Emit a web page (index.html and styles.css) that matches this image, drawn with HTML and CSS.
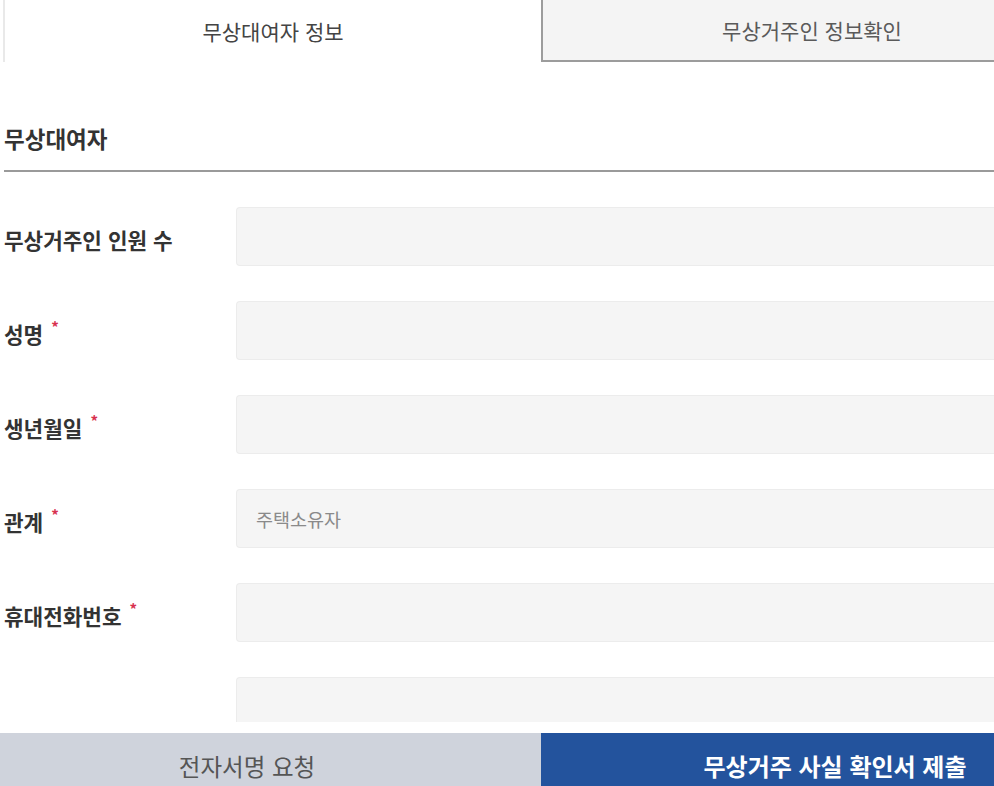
FILE: index.html
```html
<!DOCTYPE html>
<html lang="ko">
<head>
<meta charset="utf-8">
<title>무상거주 사실 확인서</title>
<link rel="stylesheet" href="styles.css">
</head>
<body>
<div class="page">
  <div class="tabs">
    <div class="tab tab-active">무상대여자 정보</div>
    <div class="tab tab-idle">무상거주인 정보확인</div>
  </div>

  <section class="section">
    <h2 class="section-title">무상대여자</h2>
    <div class="form">
      <div class="row">
        <div class="label">무상거주인 인원 수</div>
        <div class="field"></div>
      </div>
      <div class="row">
        <div class="label">성명<span class="req">*</span></div>
        <div class="field"></div>
      </div>
      <div class="row">
        <div class="label">생년월일<span class="req">*</span></div>
        <div class="field"></div>
      </div>
      <div class="row">
        <div class="label">관계<span class="req">*</span></div>
        <div class="field"><span class="placeholder">주택소유자</span></div>
      </div>
      <div class="row">
        <div class="label">휴대전화번호<span class="req">*</span></div>
        <div class="field"></div>
      </div>
      <div class="row">
        <div class="label"></div>
        <div class="field"></div>
      </div>
    </div>
  </section>
</div>

<div class="footer">
  <div class="footer-buttons">
    <div class="btn btn-gray">전자서명 요청</div>
    <div class="btn btn-blue">무상거주 사실 확인서 제출</div>
  </div>
</div>
</body>
</html>
```

FILE: styles.css
```css
html, body {
  margin: 0;
  padding: 0;
  background: #ffffff;
  overflow: hidden;
}

body {
  font-family: "Noto Sans CJK KR", "Noto Sans", sans-serif;
  color: #333333;
  height: 786px;
}

.page {
  width: 100%;
}

.tabs {
  display: flex;
  height: 62px;
}

.tab {
  display: flex;
  align-items: center;
  justify-content: center;
  font-size: 21px;
  color: #444444;
  box-sizing: border-box;
}

.tab-active {
  width: 538px;
  margin-left: 3px;
  border-left: 2px solid #e9e9e9;
  background: #ffffff;
}

.tab-idle {
  flex: 1;
  padding-left: 87px;
  background: #f4f4f4;
  border-left: 2px solid #9c9c9c;
  border-bottom: 2px solid #9c9c9c;
  color: #5a5a5a;
}

.section {
  padding-left: 4px;
}

.section-title {
  margin: 0;
  padding-top: 61px;
  line-height: 30px;
  height: 30px;
  padding-bottom: 17px;
  font-size: 22.5px;
  font-weight: 700;
  color: #333333;
  border-bottom: 2px solid #9a9a9a;
  box-sizing: content-box;
}

.form {
  display: flex;
  flex-direction: column;
  gap: 35px;
  padding-top: 35px;
}

.row {
  display: flex;
  align-items: center;
  height: 59px;
}

.label {
  width: 232px;
  font-size: 21.3px;
  font-weight: 700;
  color: #333333;
  padding-top: 6px;
  display: flex;
  align-items: flex-start;
}

.req {
  color: #d8314f;
  font-size: 15px;
  line-height: 1;
  margin-left: 8px;
  margin-top: 1px;
}

.field {
  flex: 1;
  height: 59px;
  box-sizing: border-box;
  background: #f5f5f5;
  border: 1px solid #ececec;
  border-right: none;
  border-radius: 4px 0 0 4px;
  display: flex;
  align-items: center;
  padding-left: 19px;
}

.placeholder {
  font-size: 18.5px;
  color: #8a8a8a;
}

.footer {
  position: fixed;
  left: 0;
  bottom: 0;
  width: 100%;
  height: 64px;
  background: #ffffff;
  padding-top: 11px;
  box-sizing: border-box;
}

.footer-buttons {
  display: flex;
  height: 53px;
}

.btn {
  display: flex;
  align-items: center;
  justify-content: center;
  padding-top: 12px;
  box-sizing: border-box;
}

.btn-gray {
  width: 541px;
  padding-right: 47px;
  background: #cfd3dc;
  color: #555555;
  font-size: 23.5px;
}

.btn-blue {
  flex: 1;
  padding-left: 135px;
  background: #23539d;
  color: #ffffff;
  font-size: 24px;
  font-weight: 700;
}
```
